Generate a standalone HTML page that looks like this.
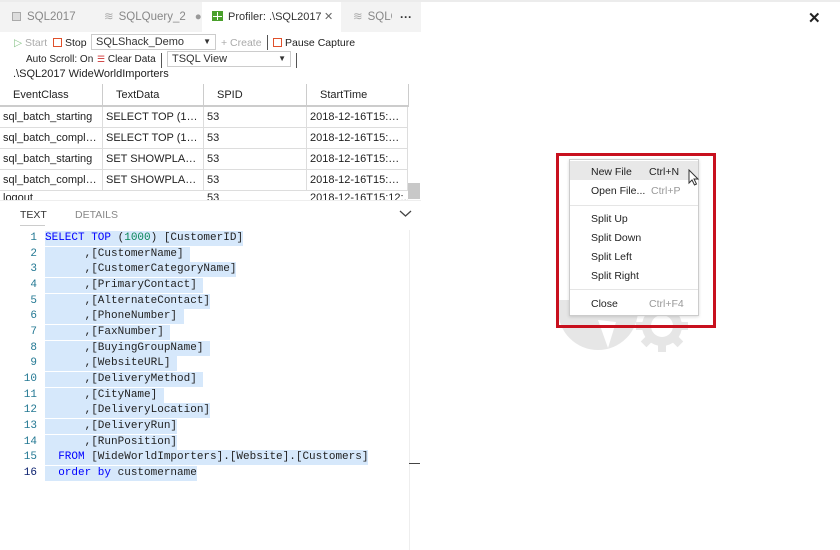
<!DOCTYPE html><html><head><style>
*{margin:0;padding:0;box-sizing:border-box}
body{width:840px;height:550px;background:#fff;font-family:"Liberation Sans",sans-serif;position:relative;overflow:hidden;color:#333}
.a{position:absolute;white-space:nowrap}
.f{font-size:10.5px}
.tab{position:absolute;top:2px;height:30px;font-size:11.5px;line-height:30px;color:#888;white-space:nowrap}
.hdr{position:absolute;top:84px;height:23px;font-size:11px;line-height:22px;color:#222;border-right:1px solid #ccc;border-bottom:2px solid #ccc;padding-left:13px;white-space:nowrap}
.row{position:absolute;left:0;width:408px;height:21px;border-bottom:1px solid #ddd;font-size:11px;line-height:20px;color:#222}
.row span{position:absolute;top:0;height:20px;border-right:1px solid #ddd;padding-left:3px;padding-right:2px;overflow:hidden;white-space:nowrap;text-overflow:ellipsis}
.ln{position:absolute;left:0;width:37px;text-align:right;color:#237893;font-family:"Liberation Mono",monospace;font-size:11px;line-height:15px}
.cl{position:absolute;left:45px;background:#d6e8fb;height:15px;line-height:15px;color:#222;white-space:pre;font-family:"Liberation Mono",monospace;font-size:11px}
.k{color:#0000ff}.n{color:#098658}
.mi{position:absolute;left:591px;font-size:10.5px;color:#222}
.sc{position:absolute;font-size:10.5px;color:#999}
</style></head><body>
<div class="a" style="left:0;top:0;width:840px;height:2px;background:#ececec"></div>
<div class="a" style="left:0;top:2px;width:421px;height:30px;background:#f3f3f3"></div>
<div class="tab" style="left:12px"><span style="display:inline-block;width:9px;height:9px;border:1.5px solid #aaa;background:#ddd;margin-right:6px;vertical-align:-1px"></span>SQL2017</div>
<div class="tab" style="left:104px"><span style="color:#aaa;margin-right:5px">≋</span>SQLQuery_2<span style="color:#999;margin-left:9px">●</span></div>
<div class="a" style="left:202px;top:2px;width:139px;height:30px;background:#fff"></div>
<div class="tab" style="left:212px;color:#333;font-size:11px"><span style="display:inline-block;width:11px;height:10px;margin-right:5px;vertical-align:-1px;border:1px solid #4aa02c;background:#4aa02c;background-image:linear-gradient(#fff,#fff),linear-gradient(#fff,#fff);background-size:1px 100%,100% 1px;background-position:4px 0,0 4px;background-repeat:no-repeat"></span>Profiler: .\SQL2017</div>
<div class="a" style="left:324px;top:10px;font-size:11px;color:#666">✕</div>
<div class="a" style="left:341px;top:2px;width:80px;height:30px;overflow:hidden"><div class="tab" style="left:12px;top:0"><span style="color:#aaa;margin-right:5px">≋</span>SQLQuery</div></div>
<div class="a" style="left:392px;top:2px;width:29px;height:30px;background:#f3f3f3"></div>
<div class="tab" style="left:400px;color:#333;font-weight:bold;font-size:12px">···</div>
<div class="a" style="left:808px;top:9px;font-size:15px;font-weight:bold;color:#222">✕</div>

<div class="a f" style="left:14px;top:37px;color:#aaa"><span style="color:#8bc48b">▷</span> Start</div>
<div class="a f" style="left:53px;top:37px;color:#222"><span style="display:inline-block;width:9px;height:9px;border:1.5px solid #e0502b;vertical-align:-1px;margin-right:3px"></span>Stop</div>
<div class="a" style="left:91px;top:34px;width:125px;height:16px;border:1px solid #ccc;font-size:11px;line-height:14px;padding-left:4px;color:#333">SQLShack_Demo<span style="position:absolute;right:4px;font-size:8px">▼</span></div>
<div class="a f" style="left:221px;top:37px;color:#aaa">+ Create</div>
<div class="a" style="left:267px;top:35px;width:1px;height:15px;background:#555"></div>
<div class="a f" style="left:273px;top:37px;color:#222"><span style="display:inline-block;width:9px;height:9px;border:1.5px solid #e0502b;vertical-align:-1px;margin-right:3px"></span>Pause Capture</div>
<div class="a" style="left:26px;top:54px;color:#222;font-size:10px">Auto Scroll: On</div>
<div class="a" style="left:97px;top:54px;color:#222;font-size:10px"><span style="color:#c33;font-size:9px">☰</span> Clear Data</div>
<div class="a" style="left:161px;top:53px;width:1px;height:15px;background:#555"></div>
<div class="a" style="left:167px;top:51px;width:124px;height:16px;border:1px solid #ccc;font-size:11px;line-height:14px;padding-left:4px;color:#333">TSQL View<span style="position:absolute;right:4px;font-size:8px">▼</span></div>
<div class="a" style="left:296px;top:53px;width:1px;height:15px;background:#555"></div>
<div class="a" style="left:13px;top:68px;font-size:11px;color:#222">.\SQL2017 WideWorldImporters</div>

<div class="hdr" style="left:0;width:103px">EventClass</div>
<div class="hdr" style="left:103px;width:101px">TextData</div>
<div class="hdr" style="left:204px;width:103px">SPID</div>
<div class="hdr" style="left:307px;width:102px">StartTime</div>
<div class="row" style="top:107px"><span style="left:0;width:103px">sql_batch_starting</span><span style="left:103px;width:101px">SELECT TOP (1000...</span><span style="left:204px;width:103px">53</span><span style="left:307px;width:101px">2018-12-16T15:12:...</span></div>
<div class="row" style="top:128px"><span style="left:0;width:103px">sql_batch_complet...</span><span style="left:103px;width:101px">SELECT TOP (1000...</span><span style="left:204px;width:103px">53</span><span style="left:307px;width:101px">2018-12-16T15:12:...</span></div>
<div class="row" style="top:149px"><span style="left:0;width:103px">sql_batch_starting</span><span style="left:103px;width:101px">SET SHOWPLAN_X...</span><span style="left:204px;width:103px">53</span><span style="left:307px;width:101px">2018-12-16T15:12:...</span></div>
<div class="row" style="top:170px"><span style="left:0;width:103px">sql_batch_complet...</span><span style="left:103px;width:101px">SET SHOWPLAN_X...</span><span style="left:204px;width:103px">53</span><span style="left:307px;width:101px">2018-12-16T15:12:...</span></div>
<div class="a" style="left:0;top:191px;width:408px;height:9px;overflow:hidden;font-size:11px;color:#222"><span class="a" style="left:3px;top:1px">logout</span><span class="a" style="left:207px;top:1px">53</span><span class="a" style="left:310px;top:1px">2018-12-16T15:12:...</span></div>
<div class="a" style="left:408px;top:183px;width:12px;height:16px;background:#c8c8c8"></div>
<div class="a" style="left:0;top:200px;width:421px;height:1px;background:#eee"></div>

<div class="a" style="left:20px;top:209px;font-size:10.5px;color:#333">TEXT</div>
<div class="a" style="left:20px;top:225px;width:25px;height:1px;background:#ccc"></div>
<div class="a" style="left:75px;top:209px;font-size:10.5px;color:#888">DETAILS</div>
<svg class="a" style="left:399px;top:210px" width="13" height="8"><path d="M1 1 L6.5 6 L12 1" fill="none" stroke="#444" stroke-width="1.3"/></svg>
<div class="a" style="left:409px;top:230px;width:1px;height:320px;background:#eee"></div>
<div class="a" style="left:409px;top:463px;width:11px;height:1px;background:#444"></div>

<div class="ln" style="top:231px">1</div><div class="cl" style="top:231px"><span class="k">SELECT TOP</span> (<span class="n">1000</span>) [CustomerID]</div>
<div class="ln" style="top:247px">2</div><div class="cl" style="top:247px">      ,[CustomerName] </div>
<div class="ln" style="top:262px">3</div><div class="cl" style="top:262px">      ,[CustomerCategoryName]</div>
<div class="ln" style="top:278px">4</div><div class="cl" style="top:278px">      ,[PrimaryContact] </div>
<div class="ln" style="top:294px">5</div><div class="cl" style="top:294px">      ,[AlternateContact]</div>
<div class="ln" style="top:309px">6</div><div class="cl" style="top:309px">      ,[PhoneNumber] </div>
<div class="ln" style="top:325px">7</div><div class="cl" style="top:325px">      ,[FaxNumber] </div>
<div class="ln" style="top:341px">8</div><div class="cl" style="top:341px">      ,[BuyingGroupName] </div>
<div class="ln" style="top:356px">9</div><div class="cl" style="top:356px">      ,[WebsiteURL] </div>
<div class="ln" style="top:372px">10</div><div class="cl" style="top:372px">      ,[DeliveryMethod] </div>
<div class="ln" style="top:388px">11</div><div class="cl" style="top:388px">      ,[CityName] </div>
<div class="ln" style="top:403px">12</div><div class="cl" style="top:403px">      ,[DeliveryLocation]</div>
<div class="ln" style="top:419px">13</div><div class="cl" style="top:419px">      ,[DeliveryRun]</div>
<div class="ln" style="top:435px">14</div><div class="cl" style="top:435px">      ,[RunPosition]</div>
<div class="ln" style="top:450px">15</div><div class="cl" style="top:450px">  <span class="k">FROM</span> [WideWorldImporters].[Website].[Customers]</div>
<div class="ln" style="top:466px;color:#0b216f">16</div><div class="cl" style="top:466px">  <span class="k">order by</span> customername</div>

<svg class="a" style="left:540px;top:280px" width="170" height="100">
<path d="M18 30 A40 40 0 0 0 98 30 L98 20 L18 20Z" fill="#e6e6e6"/>
<path d="M58 40 L68 68 L76 42Z" fill="#fff"/>
<g fill="#e6e6e6" transform="translate(122,46)"><circle r="20"/><rect x="-4" y="-26" width="8" height="52"/><rect x="-26" y="-4" width="52" height="8"/><rect x="-4" y="-26" width="8" height="52" transform="rotate(45)"/><rect x="-4" y="-26" width="8" height="52" transform="rotate(-45)"/><circle r="11" fill="#fff"/></g>
</svg>

<div class="a" style="left:556px;top:153px;width:160px;height:175px;border:3px solid #c8101e"></div>
<div class="a" style="left:569px;top:159px;width:130px;height:157px;background:#fff;border:1px solid #ccc;box-shadow:0 1px 3px rgba(0,0,0,.15)"></div>
<div class="a" style="left:570px;top:161px;width:128px;height:19px;background:#e8e8e8"></div>
<div class="mi a" style="top:166px">New File</div><div class="a" style="left:649px;top:166px;font-size:10.5px;color:#222">Ctrl+N</div>
<div class="mi a" style="top:185px">Open File...</div><div class="sc" style="left:651px;top:185px">Ctrl+P</div>
<div class="a" style="left:570px;top:205px;width:128px;height:1px;background:#e5e5e5"></div>
<div class="mi a" style="top:213px">Split Up</div>
<div class="mi a" style="top:232px">Split Down</div>
<div class="mi a" style="top:251px">Split Left</div>
<div class="mi a" style="top:270px">Split Right</div>
<div class="a" style="left:570px;top:289px;width:128px;height:1px;background:#e5e5e5"></div>
<div class="mi a" style="top:298px">Close</div><div class="sc" style="left:649px;top:298px">Ctrl+F4</div>
<svg class="a" style="left:688px;top:169px" width="12" height="18"><path d="M1 1 L1 14 L4 11 L6.5 16 L8.5 15 L6 10 L10 10Z" fill="#fff" stroke="#333" stroke-width="1"/></svg>
</body></html>
